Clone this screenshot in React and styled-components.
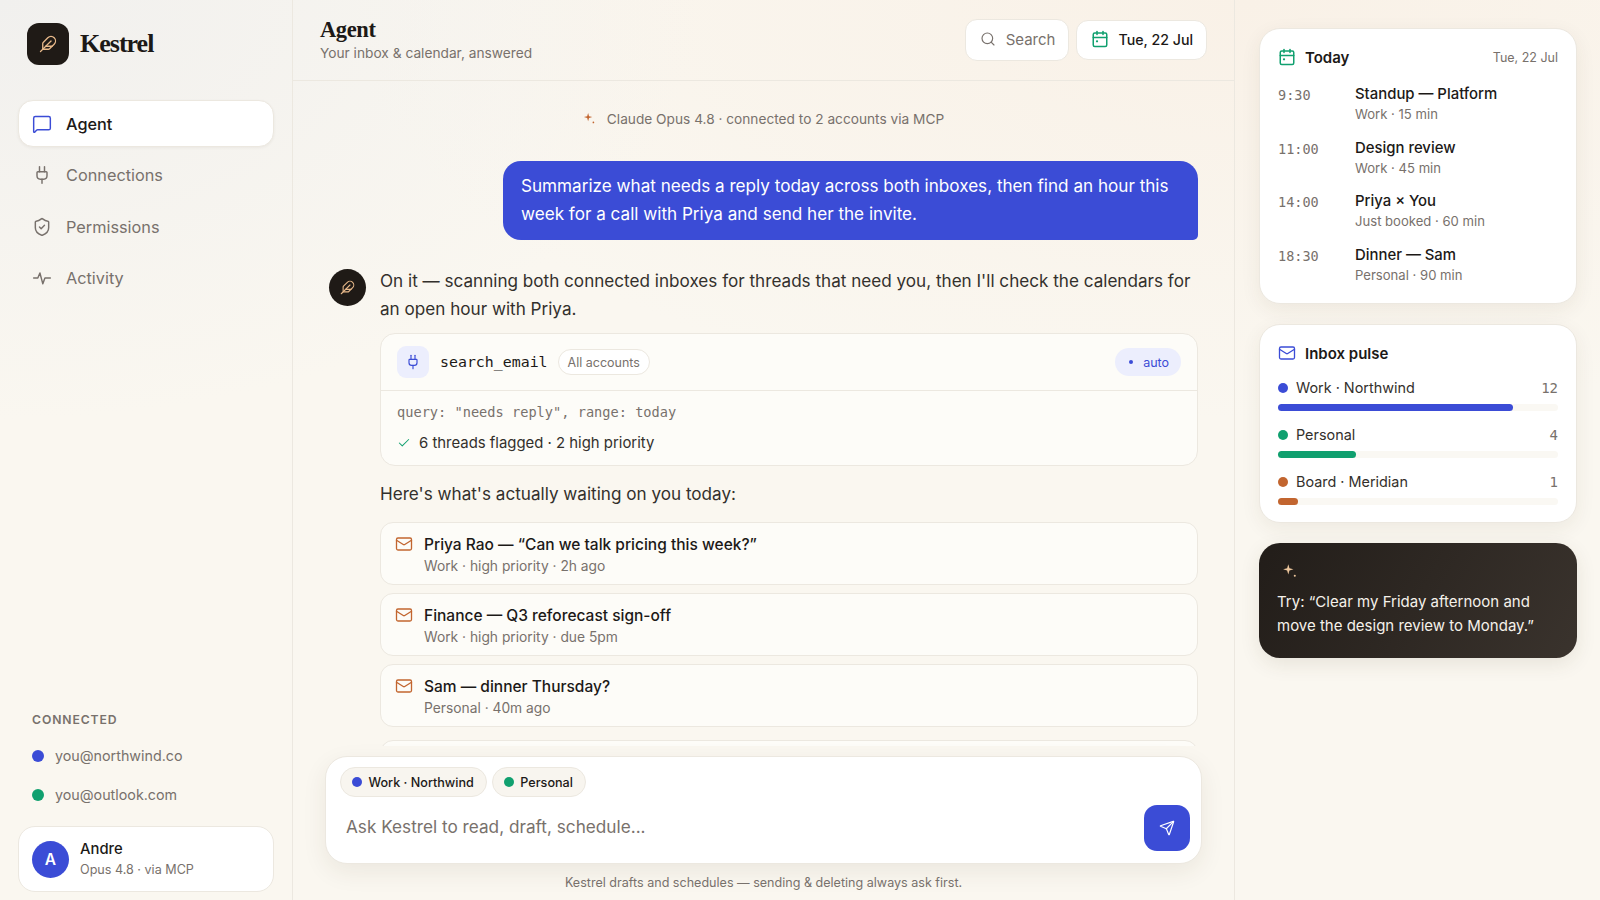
import styled, { createGlobalStyle } from 'styled-components';
import {
  MessageSquare,
  Plug,
  ShieldCheck,
  Feather,
  Search,
  Check,
  Mail,
  Send,
} from 'lucide-react';

const BLUE = '#3b4cd6';
const GREEN = '#10a06f';
const ORANGE = '#c2652f';
const INK = '#1c1917';
const MUTED = '#78716c';
const LINE = '#ece8e0';
const SANS = '"Inter", "Liberation Sans", sans-serif';
const SERIF = '"Liberation Serif", "DejaVu Serif", serif';
const MONO = '"DejaVu Sans Mono", "Liberation Mono", monospace';

const GlobalStyle = createGlobalStyle`
  html, body {
    margin: 0;
    height: 100%;
    overflow: hidden;
  }
  body {
    font-family: ${SANS};
    color: ${INK};
    background:
      radial-gradient(700px 420px at 0% 0%, #f1f0ee 0%, rgba(241, 240, 238, 0) 100%),
      radial-gradient(900px 420px at 78% 0%, #f9f1e7 0%, rgba(249, 241, 231, 0) 100%),
      #faf7f0;
  }
  * {
    box-sizing: border-box;
  }
`;

const Page = styled.div`
  display: grid;
  grid-template-columns: 293px 1fr 365px;
  grid-template-rows: minmax(0, 1fr);
  width: 1600px;
  height: 900px;
  overflow: hidden;
`;

const Sidebar = styled.aside`
  display: flex;
  flex-direction: column;
  padding: 23px 18px 8px 18px;
  border-right: 1px solid ${LINE};
`;

const Brand = styled.div`
  display: flex;
  align-items: center;
  gap: 11px;
  padding-left: 9px;
  margin-bottom: 35px;
`;

const LogoMark = styled.div`
  width: ${(p) => p.$size}px;
  height: ${(p) => p.$size}px;
  margin-top: ${(p) => p.$top || 0}px;
  border-radius: ${(p) => p.$radius};
  background: #1f1a16;
  color: #e8b98a;
  display: flex;
  align-items: center;
  justify-content: center;
  flex: none;
`;

const BrandName = styled.div`
  font-family: ${SERIF};
  font-weight: 700;
  font-size: 26px;
  letter-spacing: -1px;
`;

const Nav = styled.nav`
  display: flex;
  flex-direction: column;
  gap: 4.5px;
`;

const NavItem = styled.div`
  display: flex;
  align-items: center;
  gap: 14px;
  height: 47px;
  padding-left: 13px;
  border-radius: 15px;
  font-size: 16.3px;
  font-weight: ${(p) => (p.$active ? 500 : 400)};
  color: ${(p) => (p.$active ? INK : MUTED)};
  background: ${(p) => (p.$active ? '#fff' : 'transparent')};
  border: 1px solid ${(p) => (p.$active ? LINE : 'transparent')};
  box-shadow: ${(p) => (p.$active ? '0 1px 3px rgba(60, 50, 30, 0.06)' : 'none')};

  svg {
    color: ${(p) => (p.$active ? BLUE : MUTED)};
  }
`;

const Spacer = styled.div`
  flex: 1;
`;

const SectionLabel = styled.div`
  padding-left: 14px;
  font-size: 12.2px;
  font-weight: 600;
  letter-spacing: 0.9px;
  color: ${MUTED};
  margin-bottom: 9px;
`;

const AccountRow = styled.div`
  display: flex;
  align-items: center;
  gap: 11px;
  height: 39px;
  padding-left: 14px;
  font-size: 14.3px;
  color: ${MUTED};
`;

const Dot = styled.span`
  width: ${(p) => p.$size || 10}px;
  height: ${(p) => p.$size || 10}px;
  border-radius: 50%;
  background: ${(p) => p.$color};
  flex: none;
`;

const UserCard = styled.div`
  display: flex;
  align-items: center;
  gap: 11px;
  height: 66px;
  margin-top: 12px;
  padding-left: 13px;
  border-radius: 17px;
  background: #fff;
  border: 1px solid ${LINE};
`;

const Avatar = styled.div`
  width: 37px;
  height: 37px;
  border-radius: 50%;
  background: ${BLUE};
  color: #fff;
  font-weight: 600;
  font-size: 15.5px;
  display: flex;
  align-items: center;
  justify-content: center;
`;

const UserName = styled.div`
  font-size: 14.8px;
  font-weight: 500;
  line-height: 22px;
`;

const UserMeta = styled.div`
  font-size: 12.6px;
  color: ${MUTED};
  line-height: 20px;
`;

const Main = styled.main`
  display: flex;
  flex-direction: column;
  min-width: 0;
  min-height: 0;
  border-right: 1px solid ${LINE};
`;

const Header = styled.header`
  display: flex;
  align-items: center;
  justify-content: space-between;
  height: 81px;
  flex: none;
  padding: 0 27px;
  border-bottom: 1px solid ${LINE};
`;

const PageHeading = styled.div`
  margin-top: -2px;
`;

const PageTitle = styled.h1`
  margin: 0 0 -1px;
  font-family: ${SERIF};
  font-weight: 700;
  font-size: 22.5px;
  line-height: 28px;
  letter-spacing: -0.4px;
`;

const PageSub = styled.div`
  font-size: 13.72px;
  color: ${MUTED};
  line-height: 20px;
`;

const HeaderActions = styled.div`
  display: flex;
  align-items: center;
  gap: 7px;
`;

const HeaderButton = styled.div`
  display: flex;
  align-items: center;
  gap: ${(p) => (p.$strong ? 9 : 10)}px;
  height: ${(p) => (p.$strong ? 40 : 42)}px;
  padding: 0 13px 2px 14px;
  background: #fff;
  border: 1px solid ${LINE};
  border-radius: 12px;
  font-size: ${(p) => (p.$strong ? 14.2 : 15)}px;
  font-weight: ${(p) => (p.$strong ? 500 : 400)};
  color: ${(p) => (p.$strong ? INK : MUTED)};
`;

const Thread = styled.div`
  flex: 1;
  min-height: 0;
  overflow: hidden;
  padding: 28px 36px 0;
`;

const StatusLine = styled.div`
  display: flex;
  align-items: center;
  justify-content: center;
  gap: 11px;
  height: 19px;
  font-size: 13.7px;
  color: ${MUTED};
  margin-bottom: 33px;
`;

const UserBubble = styled.div`
  width: 695px;
  margin-left: auto;
  padding: 11px 18px 13px;
  background: ${BLUE};
  color: #fff;
  font-size: 17.13px;
  line-height: 27.5px;
  border-radius: 18px 18px 5px 18px;
  margin-bottom: 27px;
`;

const AgentRow = styled.div`
  display: flex;
  gap: 14px;
`;

const AgentBody = styled.div`
  flex: 1;
  min-width: 0;
`;

const AgentText = styled.p`
  margin: 0;
  font-size: 17.13px;
  line-height: 27.5px;
  color: #33302c;
`;

const ToolCard = styled.div`
  margin: 11px 0 14px;
  background: #fdfcf8;
  border: 1px solid ${LINE};
  border-radius: 15px;
`;

const ToolHead = styled.div`
  display: flex;
  align-items: center;
  height: 57px;
  padding: 0 16px;
  border-bottom: 1px solid ${LINE};
`;

const ToolIcon = styled.div`
  width: 32px;
  height: 32px;
  border-radius: 9px;
  background: #eceefd;
  color: ${BLUE};
  display: flex;
  align-items: center;
  justify-content: center;
  margin-right: 11px;
`;

const ToolName = styled.span`
  font-family: ${MONO};
  font-size: 14.9px;
  margin-right: 10px;
`;

const ScopePill = styled.span`
  height: 26px;
  padding: 0 9px;
  display: flex;
  align-items: center;
  border-radius: 13px;
  background: #fff;
  border: 1px solid ${LINE};
  font-size: 12.5px;
  color: ${MUTED};
`;

const AutoPill = styled.span`
  margin-left: auto;
  display: flex;
  align-items: center;
  gap: 10px;
  height: 28px;
  padding: 0 12px 0 14px;
  border-radius: 14px;
  background: #eceefd;
  color: ${BLUE};
  font-size: 12.5px;
`;

const ToolBody = styled.div`
  padding: 11px 16px 11px;
`;

const ToolQuery = styled.div`
  font-family: ${MONO};
  font-size: 13.65px;
  line-height: 20px;
  color: ${MUTED};
  margin-bottom: 10px;
`;

const ToolResult = styled.div`
  display: flex;
  align-items: center;
  gap: 8px;
  font-size: 14.9px;
  line-height: 22px;
  color: #33302c;

  svg {
    color: ${GREEN};
  }
`;

const MailList = styled.div`
  display: flex;
  flex-direction: column;
  gap: 8px;
  margin-top: 14px;
`;

const MailCard = styled.div`
  display: flex;
  gap: 11px;
  height: 63px;
  flex: none;
  margin-top: ${(p) => p.$top || 0}px;
  padding: 11px 14px;
  background: #fdfcf8;
  border: 1px solid ${LINE};
  border-radius: 13px;

  svg {
    color: ${ORANGE};
    margin-top: 1px;
  }
`;

const MailTitle = styled.div`
  font-size: 15.5px;
  font-weight: 450;
  line-height: 22px;
`;

const MailMeta = styled.div`
  font-size: 13.8px;
  line-height: 20px;
  color: ${MUTED};
`;

const ComposerWrap = styled.div`
  flex: none;
  padding: 10px 32px 0;
`;

const Composer = styled.div`
  height: 108px;
  padding: 10px 11px 10px 14px;
  background: #fff;
  border: 1px solid ${LINE};
  border-radius: 22px;
  box-shadow: 0 8px 24px rgba(70, 55, 30, 0.08);
  display: flex;
  flex-direction: column;
`;

const ChipRow = styled.div`
  display: flex;
  gap: 5px;
`;

const Chip = styled.span`
  display: flex;
  align-items: center;
  gap: 6.5px;
  height: 30px;
  padding: 0 12px 0 11px;
  border-radius: 15px;
  background: #f8f5ef;
  border: 1px solid ${LINE};
  font-size: 12.6px;
  font-weight: 500;
`;

const InputRow = styled.div`
  display: flex;
  align-items: center;
  justify-content: space-between;
  padding-left: 6px;
  margin-top: 8px;
`;

const Placeholder = styled.span`
  font-size: 17.2px;
  padding-bottom: 4px;
  color: ${MUTED};
`;

const SendButton = styled.div`
  width: 46px;
  height: 46px;
  border-radius: 13px;
  background: ${BLUE};
  color: #fff;
  display: flex;
  align-items: center;
  justify-content: center;
`;

const Disclaimer = styled.div`
  text-align: center;
  font-size: 12.57px;
  line-height: 18px;
  color: ${MUTED};
  padding: 10px 0 8px;
`;

const Rail = styled.aside`
  display: flex;
  flex-direction: column;
  gap: 20px;
  padding: 28px 23px 0 24px;
`;

const RailCard = styled.section`
  padding: 18px 18px ${(p) => p.$bottom}px;
  background: #fff;
  border: 1px solid ${LINE};
  border-radius: 21px;
  box-shadow: 0 6px 20px rgba(70, 55, 30, 0.07);
`;

const CardHead = styled.div`
  display: flex;
  align-items: center;
  gap: 9px;
  height: 20px;
  font-size: 15px;
  font-weight: 600;
`;

const CardDate = styled.span`
  margin-left: auto;
  font-size: 12.5px;
  font-weight: 400;
  color: ${MUTED};
`;

const EventList = styled.div`
  margin-top: 17px;
  display: flex;
  flex-direction: column;
  gap: 12.5px;
`;

const EventRow = styled.div`
  display: flex;
`;

const EventTime = styled.div`
  width: 77px;
  font-family: ${MONO};
  font-size: 13.5px;
  line-height: 22px;
  color: ${MUTED};
`;

const EventTitle = styled.div`
  font-size: 14.9px;
  font-weight: 450;
  line-height: 20px;
`;

const EventMeta = styled.div`
  font-size: 13.1px;
  line-height: 21px;
  color: ${MUTED};
`;

const PulseList = styled.div`
  margin-top: 14px;
  display: flex;
  flex-direction: column;
  gap: 13px;
`;

const PulseLabel = styled.div`
  display: flex;
  align-items: center;
  gap: 8px;
  font-size: 14.4px;
  line-height: 22px;
  color: #33302c;
`;

const PulseCount = styled.span`
  margin-left: auto;
  font-family: ${MONO};
  font-size: 14px;
  color: ${MUTED};
`;

const Track = styled.div`
  height: 7px;
  margin-top: 5px;
  border-radius: 4px;
  background: #faf8f3;
`;

const Fill = styled.div`
  height: 100%;
  border-radius: 4px;
  background: ${(p) => p.$color};
`;

const TipCard = styled.section`
  height: 115px;
  padding: 19px 18px;
  border-radius: 21px;
  background: linear-gradient(120deg, #221d19, #3a332d);
  color: #f5f1ea;
  box-shadow: 0 6px 20px rgba(70, 55, 30, 0.1);
  font-size: 15px;
  line-height: 24px;
`;

const TipSpark = styled.div`
  height: 20px;
  margin-bottom: 8px;
  padding-left: 5px;
  color: #eec79d;
`;

const Spark = ({ size = 14, color = 'currentColor' }) => (
  <svg width={size} height={size} viewBox="0 0 14 14" fill={color}>
    <path d="M5.5 1 6.5 4.5 10 5.5 6.5 6.5 5.5 10 4.5 6.5 1 5.5 4.5 4.5Z" />
    <circle cx="11.2" cy="11.2" r="0.9" />
  </svg>
);

const CalendarDot = ({ color }) => (
  <svg
    width="18"
    height="18"
    viewBox="0 0 24 24"
    fill="none"
    stroke={color}
    strokeWidth="2"
    strokeLinecap="round"
    strokeLinejoin="round"
  >
    <path d="M8 2v4" />
    <path d="M16 2v4" />
    <rect x="3" y="4" width="18" height="18" rx="2" />
    <path d="M3 10h18" />
    <path d="M8 15h.01" strokeWidth="3" />
  </svg>
);

// flatter than lucide's Activity, the reference pulse is only about 12px tall
const Pulse = ({ size = 20 }) => (
  <svg
    width={size}
    height={size}
    viewBox="0 0 24 24"
    fill="none"
    stroke="currentColor"
    strokeWidth="1.75"
    strokeLinecap="round"
    strokeLinejoin="round"
  >
    <path d="M2 12h5l2.5-6 3.5 13 2.5-7h6.5" />
  </svg>
);

const navItems = [
  { label: 'Agent', icon: MessageSquare, active: true },
  { label: 'Connections', icon: Plug },
  { label: 'Permissions', icon: ShieldCheck },
  { label: 'Activity', icon: Pulse },
];

const mails = [
  { title: 'Priya Rao — “Can we talk pricing this week?”', meta: 'Work · high priority · 2h ago' },
  { title: 'Finance — Q3 reforecast sign-off', meta: 'Work · high priority · due 5pm' },
  { title: 'Sam — dinner Thursday?', meta: 'Personal · 40m ago' },
];

const events = [
  { time: '9:30', title: 'Standup — Platform', meta: 'Work · 15 min' },
  { time: '11:00', title: 'Design review', meta: 'Work · 45 min' },
  { time: '14:00', title: 'Priya × You', meta: 'Just booked · 60 min' },
  { time: '18:30', title: 'Dinner — Sam', meta: 'Personal · 90 min' },
];

const pulse = [
  { label: 'Work · Northwind', count: 12, color: BLUE, width: 84 },
  { label: 'Personal', count: 4, color: GREEN, width: 28 },
  { label: 'Board · Meridian', count: 1, color: ORANGE, width: 7 },
];

const App = () => {
  return (
    <Page>
      <GlobalStyle />
      <Sidebar>
        <Brand>
          <LogoMark $size={42} $radius="12px">
            <Feather size={18} strokeWidth={1.75} />
          </LogoMark>
          <BrandName>Kestrel</BrandName>
        </Brand>
        <Nav>
          {navItems.map(({ label, icon: Icon, active }) => (
            <NavItem key={label} $active={active}>
              <Icon size={20} strokeWidth={1.75} />
              {label}
            </NavItem>
          ))}
        </Nav>
        <Spacer />
        <SectionLabel>CONNECTED</SectionLabel>
        <AccountRow>
          <Dot $color={BLUE} $size={12} />
          you@northwind.co
        </AccountRow>
        <AccountRow>
          <Dot $color={GREEN} $size={12} />
          you@outlook.com
        </AccountRow>
        <UserCard>
          <Avatar>A</Avatar>
          <div>
            <UserName>Andre</UserName>
            <UserMeta>Opus 4.8 · via MCP</UserMeta>
          </div>
        </UserCard>
      </Sidebar>

      <Main>
        <Header>
          <PageHeading>
            <PageTitle>Agent</PageTitle>
            <PageSub>Your inbox &amp; calendar, answered</PageSub>
          </PageHeading>
          <HeaderActions>
            <HeaderButton>
              <Search size={16} strokeWidth={1.75} />
              Search
            </HeaderButton>
            <HeaderButton $strong>
              <CalendarDot color={GREEN} />
              Tue, 22 Jul
            </HeaderButton>
          </HeaderActions>
        </Header>

        <Thread>
          <StatusLine>
            <Spark size={13} color={ORANGE} />
            Claude Opus 4.8 · connected to 2 accounts via MCP
          </StatusLine>
          <UserBubble>
            Summarize what needs a reply today across both inboxes, then find an hour this week for a
            call with Priya and send her the invite.
          </UserBubble>
          <AgentRow>
            <LogoMark $size={37} $radius="50%" $top={2}>
              <Feather size={15} strokeWidth={1.75} />
            </LogoMark>
            <AgentBody>
              <AgentText>
                On it — scanning both connected inboxes for threads that need you, then I'll check the
                calendars for an open hour with Priya.
              </AgentText>
              <ToolCard>
                <ToolHead>
                  <ToolIcon>
                    <Plug size={16} strokeWidth={1.75} />
                  </ToolIcon>
                  <ToolName>search_email</ToolName>
                  <ScopePill>All accounts</ScopePill>
                  <AutoPill>
                    <Dot $color={BLUE} $size={4} />
                    auto
                  </AutoPill>
                </ToolHead>
                <ToolBody>
                  <ToolQuery>query: "needs reply", range: today</ToolQuery>
                  <ToolResult>
                    <Check size={14} strokeWidth={1.75} />
                    6 threads flagged · 2 high priority
                  </ToolResult>
                </ToolBody>
              </ToolCard>
              <AgentText>Here's what's actually waiting on you today:</AgentText>
              <MailList>
                {mails.map((mail) => (
                  <MailCard key={mail.title}>
                    <Mail size={18} strokeWidth={1.75} />
                    <div>
                      <MailTitle>{mail.title}</MailTitle>
                      <MailMeta>{mail.meta}</MailMeta>
                    </div>
                  </MailCard>
                ))}
                <MailCard $top={5} />
              </MailList>
            </AgentBody>
          </AgentRow>
        </Thread>

        <ComposerWrap>
          <Composer>
            <ChipRow>
              <Chip>
                <Dot $color={BLUE} />
                Work · Northwind
              </Chip>
              <Chip>
                <Dot $color={GREEN} />
                Personal
              </Chip>
            </ChipRow>
            <InputRow>
              <Placeholder>Ask Kestrel to read, draft, schedule...</Placeholder>
              <SendButton>
                <Send size={16} strokeWidth={1.75} />
              </SendButton>
            </InputRow>
          </Composer>
          <Disclaimer>Kestrel drafts and schedules — sending &amp; deleting always ask first.</Disclaimer>
        </ComposerWrap>
      </Main>

      <Rail>
        <RailCard $bottom={17.5}>
          <CardHead>
            <CalendarDot color={GREEN} />
            Today
            <CardDate>Tue, 22 Jul</CardDate>
          </CardHead>
          <EventList>
            {events.map((event) => (
              <EventRow key={event.time}>
                <EventTime>{event.time}</EventTime>
                <div>
                  <EventTitle>{event.title}</EventTitle>
                  <EventMeta>{event.meta}</EventMeta>
                </div>
              </EventRow>
            ))}
          </EventList>
        </RailCard>

        <RailCard $bottom={17}>
          <CardHead>
            <Mail size={18} strokeWidth={1.75} color={BLUE} />
            Inbox pulse
          </CardHead>
          <PulseList>
            {pulse.map((row) => (
              <div key={row.label}>
                <PulseLabel>
                  <Dot $color={row.color} />
                  {row.label}
                  <PulseCount>{row.count}</PulseCount>
                </PulseLabel>
                <Track>
                  <Fill $color={row.color} style={{ width: `${row.width}%` }} />
                </Track>
              </div>
            ))}
          </PulseList>
        </RailCard>

        <TipCard>
          <TipSpark>
            <Spark size={16} />
          </TipSpark>
          Try: “Clear my Friday afternoon and move the design review to Monday.”
        </TipCard>
      </Rail>
    </Page>
  );
};

export default App;
